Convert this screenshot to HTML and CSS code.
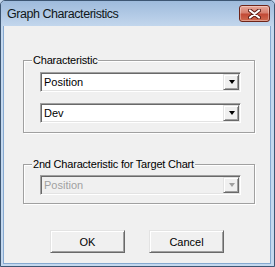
FILE: index.html
```html
<!DOCTYPE html>
<html lang="en">
<head>
  <meta charset="UTF-8">
  <title>Graph Characteristics</title>
  <link rel="stylesheet" href="styles.css">
</head>
<body>
  <div class="window">
    <div class="titlebar">
      <span class="title">Graph Characteristics</span>
      <button class="close" title="Close">
        <svg width="13" height="10" viewBox="0 0 13 10">
          <path d="M2 1.5 L11 8.5 M11 1.5 L2 8.5" stroke="#5a1a12" stroke-width="4" stroke-linecap="round"/>
          <path d="M2 1.5 L11 8.5 M11 1.5 L2 8.5" stroke="#fff" stroke-width="2.2" stroke-linecap="round"/>
        </svg>
      </button>
    </div>

    <div class="client">
      <fieldset class="group group-main">
        <legend>Characteristic</legend>
        <div class="combo">
          <span class="combo-text">Position</span>
          <span class="combo-btn"><span class="arrow"></span></span>
        </div>
        <div class="combo combo-second">
          <span class="combo-text">Dev</span>
          <span class="combo-btn"><span class="arrow"></span></span>
        </div>
      </fieldset>

      <fieldset class="group group-target">
        <legend>2nd Characteristic for Target Chart</legend>
        <div class="combo disabled">
          <span class="combo-text">Position</span>
          <span class="combo-btn"><span class="arrow"></span></span>
        </div>
      </fieldset>

      <div class="buttons">
        <button class="btn">OK</button>
        <button class="btn">Cancel</button>
      </div>
    </div>
  </div>
</body>
</html>
```

FILE: styles.css
```css
body {
  margin: 0;
  background: #c4d8ee;
  font-family: "Liberation Sans", Arial, sans-serif;
}
.window {
  width: 275px;
  height: 267px;
  box-sizing: border-box;
  display: flex;
  flex-direction: column;
  background: #c4d8ee;
  border: 1px solid #3d5673;
  border-radius: 5px 5px 0 0;
}
.titlebar {
  height: 25px;
  flex: none;
  display: flex;
  align-items: flex-start;
  padding-left: 6px;
  background: linear-gradient(#9ebbdc, #b4cbe6 60%, #c2d6ec);
  border-radius: 4px 4px 0 0;
}
.title {
  margin-top: 6px;
  font-size: 12.5px;
  line-height: 14px;
  letter-spacing: -0.45px;
  color: #101820;
}
.close {
  margin: 4px 4px 0 auto;
  width: 31px;
  height: 17px;
  padding: 0;
  display: flex;
  align-items: center;
  justify-content: center;
  border: 1px solid #6e2418;
  border-radius: 3px;
  background: linear-gradient(#e8a89a, #d7806f 45%, #c24a36 55%, #cf6a4f);
  box-shadow: inset 0 0 0 1px rgba(255, 255, 255, 0.35);
}
.client {
  flex: 1;
  display: flex;
  flex-direction: column;
  margin: 0 3px 2px 2px;
  padding-top: 28px;
  background: #f0f0f0;
  border: 1px solid #86a9d0;
  border-top: none;
  font-size: 11px;
  color: #000;
}
.group {
  margin: 0 15px 0 19px;
  padding: 6px 13px 9px 16px;
  border: 1px solid #a0a0a0;
  box-shadow: 1px 1px 0 #fff, inset 1px 1px 0 #fff;
  min-width: 0;
}
.group legend {
  margin-left: -8px;
  padding: 0 1px;
  line-height: 12px;
  letter-spacing: -0.2px;
  background: #f0f0f0;
}
.group-target {
  margin-top: 25px;
  padding-top: 5px;
  padding-bottom: 8px;
}
.combo {
  height: 20px;
  box-sizing: border-box;
  display: flex;
  align-items: stretch;
  background: #fff;
  border: 1px solid;
  border-color: #a0a0a0 #fff #fff #a0a0a0;
  box-shadow: inset 1px 1px 0 #696969, inset -1px -1px 0 #e3e3e3;
  padding: 1px;
}
.combo-second {
  margin-top: 11px;
}
.combo-text {
  flex: 1;
  padding-left: 2px;
  line-height: 16px;
}
.combo-btn {
  width: 16px;
  box-sizing: border-box;
  display: flex;
  align-items: center;
  justify-content: center;
  background: #f0f0f0;
  border: 1px solid;
  border-color: #e3e3e3 #696969 #696969 #e3e3e3;
  box-shadow: inset 1px 1px 0 #fff, inset -1px -1px 0 #a0a0a0;
}
.arrow {
  width: 0;
  height: 0;
  margin-left: 1px;
  border-left: 3.5px solid transparent;
  border-right: 3.5px solid transparent;
  border-top: 4px solid #000;
}
.combo.disabled {
  background: #f0f0f0;
}
.combo.disabled .combo-text {
  color: #a0a0a0;
}
.combo.disabled .arrow {
  border-top-color: #a0a0a0;
}
.buttons {
  display: flex;
  gap: 24px;
  margin: 26px 0 0 46px;
}
.btn {
  width: 75px;
  height: 23px;
  padding: 0;
  font-family: "Liberation Sans", Arial, sans-serif;
  font-size: 11px;
  color: #000;
  background: #f0f0f0;
  border: 1px solid;
  border-color: #e3e3e3 #696969 #696969 #e3e3e3;
  box-shadow: inset 1px 1px 0 #fff, inset -1px -1px 0 #a0a0a0;
}
```
